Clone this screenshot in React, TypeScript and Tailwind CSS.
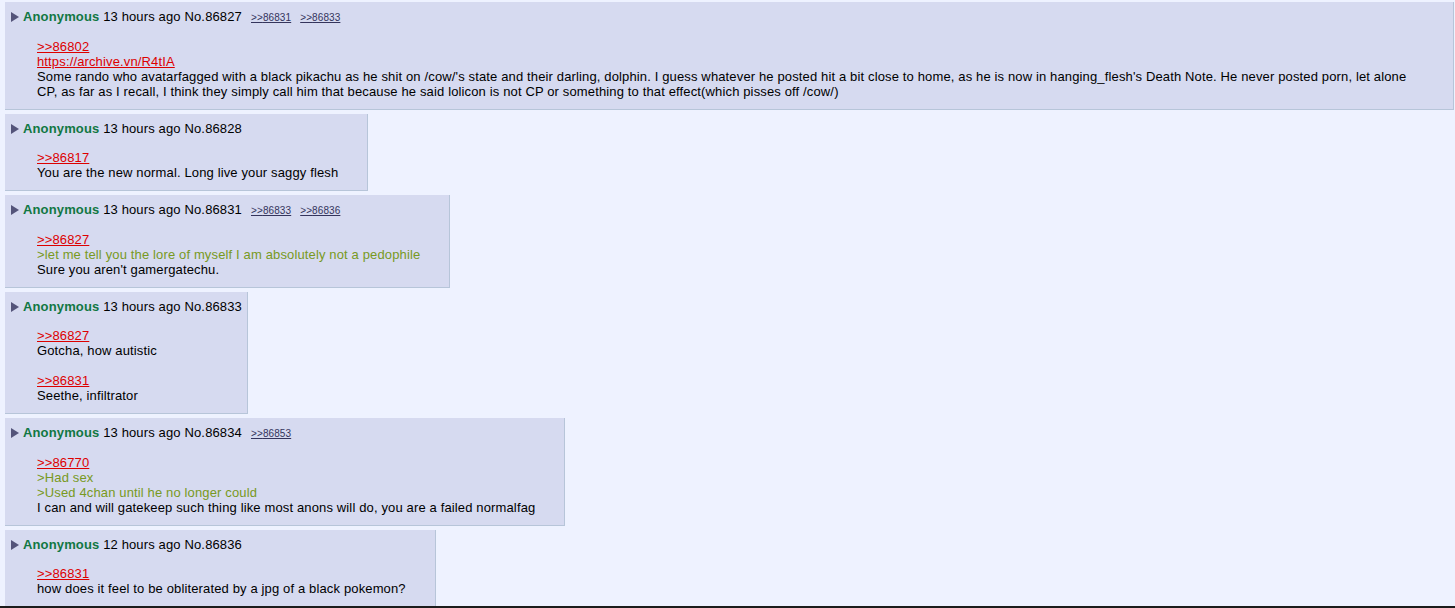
import React from "react";

type Line = { t: "q" | "g" | "n" | "br"; s?: string };
type Post = { time: string; no: string; backlinks: string[]; lines: Line[] };

const posts: Post[] = [
  {
    time: "13 hours ago",
    no: "86827",
    backlinks: ["86831", "86833"],
    lines: [
      { t: "q", s: ">>86802" },
      { t: "q", s: "https://archive.vn/R4tIA" },
      {
        t: "n",
        s: "Some rando who avatarfagged with a black pikachu as he shit on /cow/'s state and their darling, dolphin. I guess whatever he posted hit a bit close to home, as he is now in hanging_flesh's Death Note. He never posted porn, let alone CP, as far as I recall, I think they simply call him that because he said lolicon is not CP or something to that effect(which pisses off /cow/)",
      },
    ],
  },
  {
    time: "13 hours ago",
    no: "86828",
    backlinks: [],
    lines: [
      { t: "q", s: ">>86817" },
      { t: "n", s: "You are the new normal. Long live your saggy flesh" },
    ],
  },
  {
    time: "13 hours ago",
    no: "86831",
    backlinks: ["86833", "86836"],
    lines: [
      { t: "q", s: ">>86827" },
      { t: "g", s: ">let me tell you the lore of myself I am absolutely not a pedophile" },
      { t: "n", s: "Sure you aren't gamergatechu." },
    ],
  },
  {
    time: "13 hours ago",
    no: "86833",
    backlinks: [],
    lines: [
      { t: "q", s: ">>86827" },
      { t: "n", s: "Gotcha, how autistic" },
      { t: "br" },
      { t: "q", s: ">>86831" },
      { t: "n", s: "Seethe, infiltrator" },
    ],
  },
  {
    time: "13 hours ago",
    no: "86834",
    backlinks: ["86853"],
    lines: [
      { t: "q", s: ">>86770" },
      { t: "g", s: ">Had sex" },
      { t: "g", s: ">Used 4chan until he no longer could" },
      { t: "n", s: "I can and will gatekeep such thing like most anons will do, you are a failed normalfag" },
    ],
  },
  {
    time: "12 hours ago",
    no: "86836",
    backlinks: [],
    lines: [
      { t: "q", s: ">>86831" },
      { t: "n", s: "how does it feel to be obliterated by a jpg of a black pokemon?" },
    ],
  },
];

function Arrow() {
  return (
    <svg width="8" height="10" viewBox="0 0 8 10" className="inline-block mr-[4px] align-[-1px]">
      <polygon points="0,0 8,5 0,10" fill="#54547a" />
    </svg>
  );
}

function PostBox({ p }: { p: Post }) {
  return (
    <div className="max-w-full bg-[#d6daf0] border-r border-b border-[#b7c5d9] pl-[2px] pr-[2px] pt-[7px]">
      <div className="pl-[4px] pr-[3px] leading-[15px] whitespace-nowrap">
        <Arrow />
        <span className="font-bold text-[#117743]">Anonymous</span>
        <span> {p.time} No.{p.no}</span>
        {p.backlinks.map((b) => (
          <a key={b} className="ml-[9px] text-[10px] tracking-[0.1px] text-[#34345c] underline">
            &gt;&gt;{b}
          </a>
        ))}
      </div>
      <div className="ml-[30px] mr-[27px] mt-[14px] mb-[10px] leading-[15px]">
        {p.lines.map((l, i) =>
          l.t === "br" ? (
            <div key={i} className="h-[15px]" />
          ) : l.t === "q" ? (
            <div key={i}>
              <a className="text-[#dd0000] underline">{l.s}</a>
            </div>
          ) : l.t === "g" ? (
            <div key={i} className="text-[#789922]">
              {l.s}
            </div>
          ) : (
            <div key={i}>{l.s}</div>
          )
        )}
      </div>
    </div>
  );
}

export default function App() {
  return (
    <div
      className="min-h-[608px] bg-[#eef2ff] text-black text-[13px] tracking-[0.14px]"
      style={{ fontFamily: '"Liberation Sans", Arial, sans-serif' }}
    >
      <div className="flex flex-col items-start gap-[4px] pt-[2px] pl-[5px] pr-[1px]">
        {posts.map((p) => (
          <PostBox key={p.no} p={p} />
        ))}
      </div>
      <div className="fixed left-0 right-0 bottom-0 h-[2px] bg-[#1c1c1c]" />
    </div>
  );
}
